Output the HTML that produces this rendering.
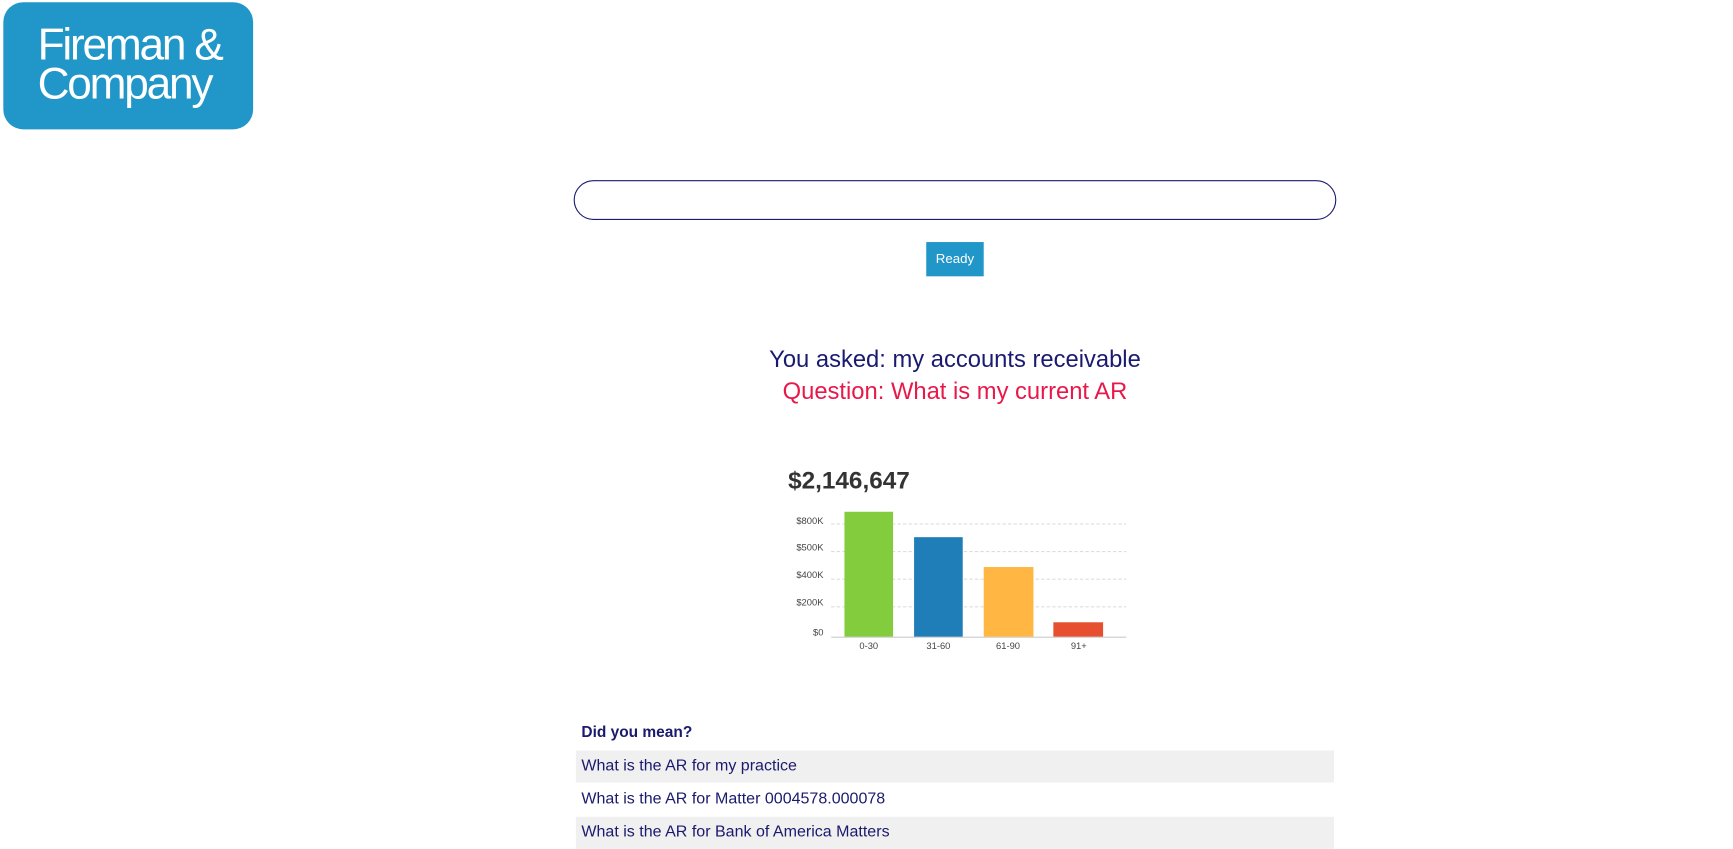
<!DOCTYPE html>
<html><head><style>
body{margin:0;width:1733px;height:849px;background:#fff;font-family:"Liberation Sans",sans-serif;position:relative;overflow:hidden}
#w{position:absolute;left:0;top:0;width:1568px;height:768px;transform:scale(1.1053);transform-origin:0 0}
.a{position:absolute}
.logo{left:3px;top:2px;width:226px;height:115px;background:#2196c8;border-radius:18px;color:#fff}
.logo div{position:absolute;left:31px;font-size:40px;letter-spacing:-2px;line-height:1}
.row{position:absolute;left:521px;width:686px;height:29px;font-size:14.5px;color:#1a1a6e;line-height:29px;padding-left:5px;box-sizing:border-box}
.g{background:#f0f0f0}
</style></head><body><div id="w">
<div class="a logo"><div style="top:19px">Fireman &amp;</div><div style="top:54px">Company</div></div>
<div class="a" style="left:519px;top:163px;width:688px;height:34px;border:1px solid #1a1a6e;border-radius:18px"></div>
<div class="a" style="left:838px;top:219px;width:52px;height:31px;background:#2196c8;color:#fff;font-size:12px;line-height:31px;text-align:center">Ready</div>
<div class="a" style="left:0;width:1728px;top:313px;text-align:center;font-size:21.5px;color:#1a1a70">You asked: my accounts receivable</div>
<div class="a" style="left:0;width:1728px;top:342px;text-align:center;font-size:21.5px;color:#e8194a">Question: What is my current AR</div>
<div class="a" style="left:713px;top:422px;font-size:22px;font-weight:bold;color:#333">$2,146,647</div>
<svg class="a" style="left:700px;top:455px" width="330" height="140" font-family="Liberation Sans" font-size="8.5" fill="#444">
<g stroke="#ddd" stroke-dasharray="3,2"><line x1="52" x2="319" y1="19" y2="19"/><line x1="52" x2="319" y1="44" y2="44"/><line x1="52" x2="319" y1="69" y2="69"/><line x1="52" x2="319" y1="94" y2="94"/></g>
<line x1="52" x2="319" y1="121.5" y2="121.5" stroke="#ccc"/>
<g text-anchor="end"><text x="45" y="19">$800K</text><text x="45" y="43">$500K</text><text x="45" y="68">$400K</text><text x="45" y="93">$200K</text><text x="45" y="120">$0</text></g>
<rect x="64" y="8" width="44" height="113" fill="#82cc3e"/>
<rect x="127" y="31" width="44" height="90" fill="#1f7db8"/>
<rect x="190" y="58" width="45" height="63" fill="#ffb643"/>
<rect x="253" y="108" width="45" height="13" fill="#e65030"/>
<g text-anchor="middle"><text x="86" y="132">0-30</text><text x="149" y="132">31-60</text><text x="212" y="132">61-90</text><text x="276" y="132">91+</text></g>
</svg>
<div class="a" style="left:526px;top:654px;font-size:14px;font-weight:bold;color:#1a1a6e">Did you mean?</div>
<div class="row g" style="top:679px">What is the AR for my practice</div>
<div class="row" style="top:709px">What is the AR for Matter 0004578.000078</div>
<div class="row g" style="top:739px">What is the AR for Bank of America Matters</div>
</div></body></html>
